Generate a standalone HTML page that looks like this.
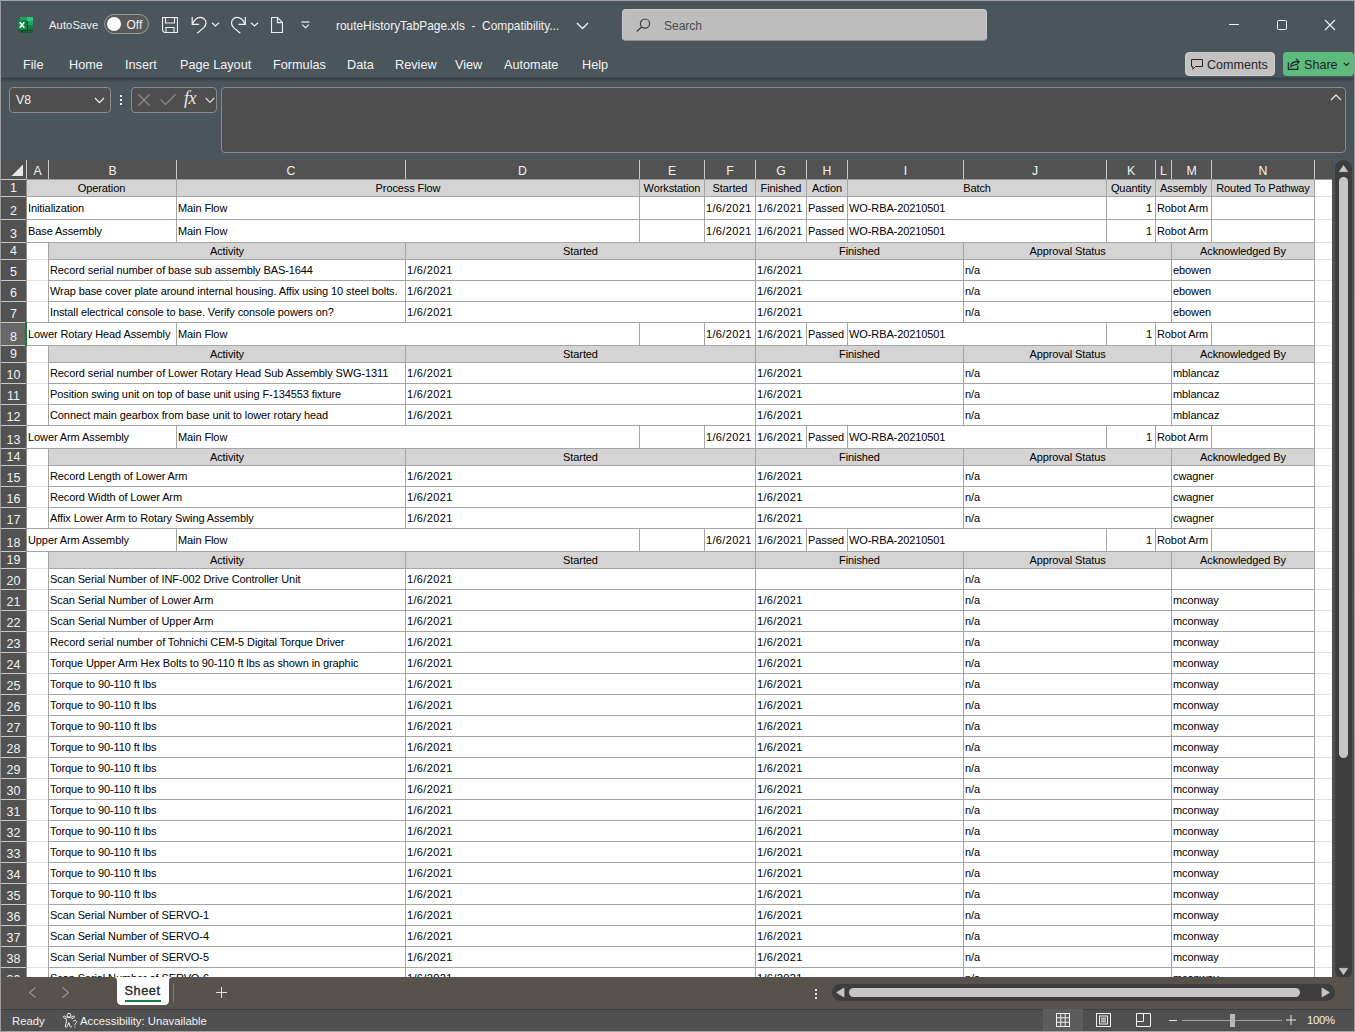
<!DOCTYPE html>
<html><head><meta charset="utf-8"><title>Excel</title>
<style>
*{margin:0;padding:0;box-sizing:border-box}
html,body{width:1355px;height:1032px;overflow:hidden;background:#4b555c}
body{position:relative;font-family:"Liberation Sans",sans-serif}
body div{position:absolute}
.t{white-space:pre;line-height:16px;height:16px}
.ui{color:#f3f3f3;font-size:12.7px}
.c{color:#000;font-size:11px;letter-spacing:-0.1px}
svg{position:absolute;overflow:visible}
</style></head><body>

<div style="left:0px;top:77px;width:1355px;height:1px;background:#444d53"></div>
<div style="left:0px;top:78px;width:1355px;height:1px;background:#363d42"></div>
<div style="left:0px;top:79px;width:1355px;height:1px;background:#3d454a"></div>
<div style="left:0px;top:80px;width:1355px;height:1px;background:#444c52"></div>
<div style="left:0px;top:81px;width:1355px;height:1px;background:#485157"></div>
<svg style="left:17px;top:17px" width="16" height="16" viewBox="0 0 16 16">
<rect x="3" y="0" width="7" height="4" fill="#21a366"/>
<rect x="10" y="0" width="6" height="4" fill="#33c481"/>
<rect x="10" y="4" width="6" height="4" fill="#21a366"/>
<rect x="3" y="4" width="7" height="8" fill="#107c41"/>
<rect x="10" y="8" width="6" height="4" fill="#107c41"/>
<rect x="3" y="12" width="13" height="4" fill="#185c37"/>
<rect x="1" y="4" width="10" height="10" fill="#0a3b1f" opacity="0.7"/>
<rect x="0" y="3" width="10" height="10" rx="0.5" fill="#118142"/>
<path d="M2.7 5.3 L7.3 10.7 M7.3 5.3 L2.7 10.7" stroke="#fff" stroke-width="1.6"/>
</svg>
<div class="t ui" style="left:49px;top:17px;font-size:11.2px;color:#f0f0f0;letter-spacing:0.1px">AutoSave</div>
<div style="left:104px;top:14px;width:45px;height:20px;border:1px solid #9c9c9c;border-radius:10px;background:#595959"></div>
<div style="left:107px;top:17px;width:14px;height:14px;border-radius:7px;background:#fff"></div>
<div class="t ui" style="left:126.5px;top:16.8px;font-size:12px;color:#f0f0f0">Off</div>
<svg style="left:162px;top:17px" width="16" height="16" viewBox="0 0 16 16" fill="none" stroke="#f0f0f0" stroke-width="1.1">
<path d="M0.55 0.55 H15.45 V15.45 H2.3 L0.55 13.7 Z"/><path d="M3.5 0.55 V6 H12.5 V0.55"/><path d="M4 15.45 V10.5 H12 V15.45"/></svg>
<svg style="left:190px;top:16px" width="18" height="18" viewBox="0 0 18 18" fill="none" stroke="#f0f0f0" stroke-width="1.2">
<path d="M2.2 1 V8.3 H9.1"/><path d="M2.6 7.9 C4.6 3.2 7.6 1.2 10.4 1.3 C13.6 1.4 16.2 4.2 16 7.4 C15.9 9.2 15 10.3 13.8 11.6 L7.2 17.2"/></svg>
<svg style="left:211px;top:22px" width="9" height="5" viewBox="0 0 9 5" fill="none" stroke="#f0f0f0" stroke-width="1.2"><path d="M1 0.8 L4.5 4 L8 0.8"/></svg>
<svg style="left:230px;top:16px" width="18" height="18" viewBox="0 0 18 18" fill="none" stroke="#f0f0f0" stroke-width="1.2">
<path d="M15.3 1 V8.3 H8.4"/><path d="M14.9 7.9 C12.9 3.2 9.9 1.2 7.1 1.3 C3.9 1.4 1.3 4.2 1.5 7.4 C1.6 9.2 2.5 10.3 3.7 11.6 L10.3 17.2"/></svg>
<svg style="left:250px;top:22px" width="9" height="5" viewBox="0 0 9 5" fill="none" stroke="#f0f0f0" stroke-width="1.2"><path d="M1 0.8 L4.5 4 L8 0.8"/></svg>
<svg style="left:271px;top:17px" width="12" height="16" viewBox="0 0 12 16" fill="none" stroke="#f0f0f0" stroke-width="1.1">
<path d="M0.55 0.55 H6.4 L11.45 5.6 V15.45 H0.55 Z"/><path d="M6.4 0.55 V5.6 H11.45"/></svg>
<svg style="left:301px;top:21px" width="9" height="8" viewBox="0 0 9 8" fill="none" stroke="#f0f0f0" stroke-width="1.2">
<path d="M0.5 1 H8.5"/><path d="M1.2 3.6 L4.5 6.6 L7.8 3.6"/></svg>
<div class="t ui" style="left:336px;top:18px;font-size:11.9px;color:#f3f3f3">routeHistoryTabPage.xls  -  Compatibility...</div>
<svg style="left:576px;top:22px" width="13" height="8" viewBox="0 0 13 8" fill="none" stroke="#f0f0f0" stroke-width="1.3"><path d="M1 1 L6.5 6.5 L12 1"/></svg>
<div style="left:622px;top:9px;width:365px;height:32px;background:#bdbdbd;border-radius:4px;border:1px solid #c9c9c9;border-bottom-color:#8f8f8f"></div>
<svg style="left:636px;top:18px" width="15" height="14" viewBox="0 0 15 14" fill="none" stroke="#3d3d3d" stroke-width="1.2">
<circle cx="9" cy="5.6" r="4.6"/><path d="M5.8 8.8 L0.8 13.5"/></svg>
<div class="t ui" style="left:664px;top:18px;font-size:12px;color:#4a4a4a">Search</div>
<div style="left:1229px;top:24px;width:10px;height:1px;background:#f3f3f3"></div>
<div style="left:1277px;top:20px;width:10px;height:10px;border:1px solid #f3f3f3;border-radius:1.5px"></div>
<svg style="left:1324px;top:19px" width="12" height="12" viewBox="0 0 12 12" fill="none" stroke="#f3f3f3" stroke-width="1.1"><path d="M1 1 L11 11 M11 1 L1 11"/></svg>
<div class="t ui" style="left:23px;top:57px;font-size:12.7px;color:#f3f3f3">File</div>
<div class="t ui" style="left:69px;top:57px;font-size:12.7px;color:#f3f3f3">Home</div>
<div class="t ui" style="left:125px;top:57px;font-size:12.7px;color:#f3f3f3">Insert</div>
<div class="t ui" style="left:180px;top:57px;font-size:12.7px;color:#f3f3f3">Page Layout</div>
<div class="t ui" style="left:273px;top:57px;font-size:12.7px;color:#f3f3f3">Formulas</div>
<div class="t ui" style="left:347px;top:57px;font-size:12.7px;color:#f3f3f3">Data</div>
<div class="t ui" style="left:395px;top:57px;font-size:12.7px;color:#f3f3f3">Review</div>
<div class="t ui" style="left:455px;top:57px;font-size:12.7px;color:#f3f3f3">View</div>
<div class="t ui" style="left:504px;top:57px;font-size:12.7px;color:#f3f3f3">Automate</div>
<div class="t ui" style="left:582px;top:57px;font-size:12.7px;color:#f3f3f3">Help</div>
<div style="left:1185px;top:52px;width:90px;height:24px;background:#c2c2c2;border-radius:4px;border:1px solid #cdcdcd"></div>
<svg style="left:1191px;top:59px" width="12" height="11" viewBox="0 0 12 11" fill="none" stroke="#262626" stroke-width="1">
<path d="M0.5 0.5 H11.5 V7.5 H4.5 L1.8 10.2 V7.5 H0.5 Z"/></svg>
<div class="t ui" style="left:1207px;top:57px;font-size:12.6px;color:#262626">Comments</div>
<div style="left:1283px;top:52px;width:71px;height:24px;background:#5dbb7e;border-radius:4px"></div>
<svg style="left:1287px;top:57px" width="14" height="14" viewBox="0 0 14 14" fill="none" stroke="#1f1f1f" stroke-width="1.1">
<path d="M1.3 5.2 V12.4 H10.8 V8.8"/><path d="M3.6 8.6 C4.2 5.8 6.6 4.4 11.6 4.6"/><path d="M2.9 10.4 C5.4 8 7.6 7.4 10.2 7.6"/><path d="M8.8 1.6 L12.2 4.7 L9.4 8"/></svg>
<div class="t ui" style="left:1304px;top:57px;font-size:12.6px;color:#1f1f1f">Share</div>
<svg style="left:1343px;top:62px" width="7" height="5" viewBox="0 0 7 5" fill="none" stroke="#1f1f1f" stroke-width="1.1"><path d="M0.8 0.8 L3.5 3.5 L6.2 0.8"/></svg>
<div style="left:9px;top:87px;width:102px;height:26px;background:#4e4e4e;border:1px solid #8b8b8b;border-radius:4px"></div>
<div class="t ui" style="left:16px;top:92px;font-size:12.3px;color:#f3f3f3">V8</div>
<svg style="left:94px;top:97px" width="11" height="7" viewBox="0 0 11 7" fill="none" stroke="#f0f0f0" stroke-width="1.2"><path d="M1 1 L5.5 5.6 L10 1"/></svg>
<div style="left:120px;top:95px;width:2px;height:2px;background:#f0f0f0"></div>
<div style="left:120px;top:99px;width:2px;height:2px;background:#f0f0f0"></div>
<div style="left:120px;top:103px;width:2px;height:2px;background:#f0f0f0"></div>
<div style="left:131px;top:87px;width:86px;height:26px;background:#4e4e4e;border:1px solid #8b8b8b;border-radius:4px"></div>
<svg style="left:138px;top:94px" width="12" height="12" viewBox="0 0 12 12" fill="none" stroke="#8e8e8e" stroke-width="1.1"><path d="M0.5 0.5 L11.5 11.5 M11.5 0.5 L0.5 11.5"/></svg>
<svg style="left:160px;top:94px" width="16" height="11" viewBox="0 0 16 11" fill="none" stroke="#8e8e8e" stroke-width="1.1"><path d="M0.5 5.5 L5.5 10.5 L15.5 0.5"/></svg>
<div class="t" style="left:184px;top:90px;font-family:'Liberation Serif',serif;font-style:italic;font-size:18px;line-height:17px;height:17px;color:#e6e6e6;letter-spacing:-0.5px">fx</div>
<svg style="left:205px;top:97px" width="10" height="7" viewBox="0 0 10 7" fill="none" stroke="#e0e0e0" stroke-width="1.1"><path d="M0.8 1 L5 5.4 L9.2 1"/></svg>
<div style="left:221px;top:87px;width:1125px;height:66px;background:#4e4e4e;border:1px solid #8b8b8b;border-radius:4px"></div>
<svg style="left:1330px;top:94px" width="12" height="7" viewBox="0 0 12 7" fill="none" stroke="#f0f0f0" stroke-width="1.2"><path d="M1 6 L6 1 L11 6"/></svg>
<div style="left:1px;top:160px;width:1331px;height:817px;overflow:hidden;background:#fff">
<div style="left:47px;top:19px;width:1px;height:900px;background:#e2e2e2"></div>
<div style="left:175px;top:19px;width:1px;height:900px;background:#e2e2e2"></div>
<div style="left:404px;top:19px;width:1px;height:900px;background:#e2e2e2"></div>
<div style="left:638px;top:19px;width:1px;height:900px;background:#e2e2e2"></div>
<div style="left:703px;top:19px;width:1px;height:900px;background:#e2e2e2"></div>
<div style="left:754px;top:19px;width:1px;height:900px;background:#e2e2e2"></div>
<div style="left:805px;top:19px;width:1px;height:900px;background:#e2e2e2"></div>
<div style="left:846px;top:19px;width:1px;height:900px;background:#e2e2e2"></div>
<div style="left:962px;top:19px;width:1px;height:900px;background:#e2e2e2"></div>
<div style="left:1105px;top:19px;width:1px;height:900px;background:#e2e2e2"></div>
<div style="left:1154px;top:19px;width:1px;height:900px;background:#e2e2e2"></div>
<div style="left:1170px;top:19px;width:1px;height:900px;background:#e2e2e2"></div>
<div style="left:1210px;top:19px;width:1px;height:900px;background:#e2e2e2"></div>
<div style="left:1313px;top:19px;width:1px;height:900px;background:#e2e2e2"></div>
<div style="left:1377px;top:19px;width:1px;height:900px;background:#e2e2e2"></div>
<div style="left:25px;top:36px;width:1400px;height:1px;background:#e2e2e2"></div>
<div style="left:25px;top:59px;width:1400px;height:1px;background:#e2e2e2"></div>
<div style="left:25px;top:82px;width:1400px;height:1px;background:#e2e2e2"></div>
<div style="left:25px;top:99px;width:1400px;height:1px;background:#e2e2e2"></div>
<div style="left:25px;top:120px;width:1400px;height:1px;background:#e2e2e2"></div>
<div style="left:25px;top:141px;width:1400px;height:1px;background:#e2e2e2"></div>
<div style="left:25px;top:162px;width:1400px;height:1px;background:#e2e2e2"></div>
<div style="left:25px;top:185px;width:1400px;height:1px;background:#e2e2e2"></div>
<div style="left:25px;top:202px;width:1400px;height:1px;background:#e2e2e2"></div>
<div style="left:25px;top:223px;width:1400px;height:1px;background:#e2e2e2"></div>
<div style="left:25px;top:244px;width:1400px;height:1px;background:#e2e2e2"></div>
<div style="left:25px;top:265px;width:1400px;height:1px;background:#e2e2e2"></div>
<div style="left:25px;top:288px;width:1400px;height:1px;background:#e2e2e2"></div>
<div style="left:25px;top:305px;width:1400px;height:1px;background:#e2e2e2"></div>
<div style="left:25px;top:326px;width:1400px;height:1px;background:#e2e2e2"></div>
<div style="left:25px;top:347px;width:1400px;height:1px;background:#e2e2e2"></div>
<div style="left:25px;top:368px;width:1400px;height:1px;background:#e2e2e2"></div>
<div style="left:25px;top:391px;width:1400px;height:1px;background:#e2e2e2"></div>
<div style="left:25px;top:408px;width:1400px;height:1px;background:#e2e2e2"></div>
<div style="left:25px;top:429px;width:1400px;height:1px;background:#e2e2e2"></div>
<div style="left:25px;top:450px;width:1400px;height:1px;background:#e2e2e2"></div>
<div style="left:25px;top:471px;width:1400px;height:1px;background:#e2e2e2"></div>
<div style="left:25px;top:492px;width:1400px;height:1px;background:#e2e2e2"></div>
<div style="left:25px;top:513px;width:1400px;height:1px;background:#e2e2e2"></div>
<div style="left:25px;top:534px;width:1400px;height:1px;background:#e2e2e2"></div>
<div style="left:25px;top:555px;width:1400px;height:1px;background:#e2e2e2"></div>
<div style="left:25px;top:576px;width:1400px;height:1px;background:#e2e2e2"></div>
<div style="left:25px;top:597px;width:1400px;height:1px;background:#e2e2e2"></div>
<div style="left:25px;top:618px;width:1400px;height:1px;background:#e2e2e2"></div>
<div style="left:25px;top:639px;width:1400px;height:1px;background:#e2e2e2"></div>
<div style="left:25px;top:660px;width:1400px;height:1px;background:#e2e2e2"></div>
<div style="left:25px;top:681px;width:1400px;height:1px;background:#e2e2e2"></div>
<div style="left:25px;top:702px;width:1400px;height:1px;background:#e2e2e2"></div>
<div style="left:25px;top:723px;width:1400px;height:1px;background:#e2e2e2"></div>
<div style="left:25px;top:744px;width:1400px;height:1px;background:#e2e2e2"></div>
<div style="left:25px;top:765px;width:1400px;height:1px;background:#e2e2e2"></div>
<div style="left:25px;top:786px;width:1400px;height:1px;background:#e2e2e2"></div>
<div style="left:25px;top:807px;width:1400px;height:1px;background:#e2e2e2"></div>
<div style="left:25px;top:828px;width:1400px;height:1px;background:#e2e2e2"></div>
<div style="left:25px;top:19px;width:151px;height:18px;border:1px solid #a5a5a5;background:#d4d4d4;"></div>
<div class="t c" style="left:-49.5px;top:20.2px;width:300px;text-align:center">Operation</div>
<div style="left:175px;top:19px;width:464px;height:18px;border:1px solid #a5a5a5;background:#d4d4d4;"></div>
<div class="t c" style="left:257.0px;top:20.2px;width:300px;text-align:center">Process Flow</div>
<div style="left:638px;top:19px;width:66px;height:18px;border:1px solid #a5a5a5;background:#d4d4d4;"></div>
<div class="t c" style="left:521.0px;top:20.2px;width:300px;text-align:center">Workstation</div>
<div style="left:703px;top:19px;width:52px;height:18px;border:1px solid #a5a5a5;background:#d4d4d4;"></div>
<div class="t c" style="left:579.0px;top:20.2px;width:300px;text-align:center">Started</div>
<div style="left:754px;top:19px;width:52px;height:18px;border:1px solid #a5a5a5;background:#d4d4d4;"></div>
<div class="t c" style="left:630.0px;top:20.2px;width:300px;text-align:center">Finished</div>
<div style="left:805px;top:19px;width:42px;height:18px;border:1px solid #a5a5a5;background:#d4d4d4;"></div>
<div class="t c" style="left:676.0px;top:20.2px;width:300px;text-align:center">Action</div>
<div style="left:846px;top:19px;width:260px;height:18px;border:1px solid #a5a5a5;background:#d4d4d4;"></div>
<div class="t c" style="left:826.0px;top:20.2px;width:300px;text-align:center">Batch</div>
<div style="left:1105px;top:19px;width:50px;height:18px;border:1px solid #a5a5a5;background:#d4d4d4;"></div>
<div class="t c" style="left:980.0px;top:20.2px;width:300px;text-align:center">Quantity</div>
<div style="left:1154px;top:19px;width:57px;height:18px;border:1px solid #a5a5a5;background:#d4d4d4;"></div>
<div class="t c" style="left:1032.5px;top:20.2px;width:300px;text-align:center">Assembly</div>
<div style="left:1210px;top:19px;width:104px;height:18px;border:1px solid #a5a5a5;background:#d4d4d4;"></div>
<div class="t c" style="left:1112.0px;top:20.2px;width:300px;text-align:center">Routed To Pathway</div>
<div style="left:25px;top:36px;width:151px;height:24px;border:1px solid #a5a5a5;background:#fff;"></div>
<div class="t c" style="left:27px;top:40.2px;">Initialization</div>
<div style="left:175px;top:36px;width:464px;height:24px;border:1px solid #a5a5a5;background:#fff;"></div>
<div class="t c" style="left:177px;top:40.2px;">Main Flow</div>
<div style="left:638px;top:36px;width:66px;height:24px;border:1px solid #a5a5a5;background:#fff;"></div>
<div style="left:703px;top:36px;width:52px;height:24px;border:1px solid #a5a5a5;background:#fff;"></div>
<div class="t c" style="left:705px;top:40.2px;letter-spacing:0.35px;">1/6/2021</div>
<div style="left:754px;top:36px;width:52px;height:24px;border:1px solid #a5a5a5;background:#fff;"></div>
<div class="t c" style="left:756px;top:40.2px;letter-spacing:0.35px;">1/6/2021</div>
<div style="left:805px;top:36px;width:42px;height:24px;border:1px solid #a5a5a5;background:#fff;"></div>
<div class="t c" style="left:807px;top:40.2px;">Passed</div>
<div style="left:846px;top:36px;width:260px;height:24px;border:1px solid #a5a5a5;background:#fff;"></div>
<div class="t c" style="left:848px;top:40.2px;">WO-RBA-20210501</div>
<div style="left:1105px;top:36px;width:50px;height:24px;border:1px solid #a5a5a5;background:#fff;"></div>
<div class="t c" style="left:851px;top:40.2px;width:300px;text-align:right">1</div>
<div style="left:1154px;top:36px;width:57px;height:24px;border:1px solid #a5a5a5;background:#fff;"></div>
<div class="t c" style="left:1156px;top:40.2px;">Robot Arm</div>
<div style="left:1210px;top:36px;width:104px;height:24px;border:1px solid #a5a5a5;background:#fff;"></div>
<div style="left:25px;top:59px;width:151px;height:24px;border:1px solid #a5a5a5;background:#fff;"></div>
<div class="t c" style="left:27px;top:63.2px;">Base Assembly</div>
<div style="left:175px;top:59px;width:464px;height:24px;border:1px solid #a5a5a5;background:#fff;"></div>
<div class="t c" style="left:177px;top:63.2px;">Main Flow</div>
<div style="left:638px;top:59px;width:66px;height:24px;border:1px solid #a5a5a5;background:#fff;"></div>
<div style="left:703px;top:59px;width:52px;height:24px;border:1px solid #a5a5a5;background:#fff;"></div>
<div class="t c" style="left:705px;top:63.2px;letter-spacing:0.35px;">1/6/2021</div>
<div style="left:754px;top:59px;width:52px;height:24px;border:1px solid #a5a5a5;background:#fff;"></div>
<div class="t c" style="left:756px;top:63.2px;letter-spacing:0.35px;">1/6/2021</div>
<div style="left:805px;top:59px;width:42px;height:24px;border:1px solid #a5a5a5;background:#fff;"></div>
<div class="t c" style="left:807px;top:63.2px;">Passed</div>
<div style="left:846px;top:59px;width:260px;height:24px;border:1px solid #a5a5a5;background:#fff;"></div>
<div class="t c" style="left:848px;top:63.2px;">WO-RBA-20210501</div>
<div style="left:1105px;top:59px;width:50px;height:24px;border:1px solid #a5a5a5;background:#fff;"></div>
<div class="t c" style="left:851px;top:63.2px;width:300px;text-align:right">1</div>
<div style="left:1154px;top:59px;width:57px;height:24px;border:1px solid #a5a5a5;background:#fff;"></div>
<div class="t c" style="left:1156px;top:63.2px;">Robot Arm</div>
<div style="left:1210px;top:59px;width:104px;height:24px;border:1px solid #a5a5a5;background:#fff;"></div>
<div style="left:25px;top:162px;width:151px;height:24px;border:1px solid #a5a5a5;background:#fff;"></div>
<div class="t c" style="left:27px;top:166.2px;">Lower Rotary Head Assembly</div>
<div style="left:175px;top:162px;width:464px;height:24px;border:1px solid #a5a5a5;background:#fff;"></div>
<div class="t c" style="left:177px;top:166.2px;">Main Flow</div>
<div style="left:638px;top:162px;width:66px;height:24px;border:1px solid #a5a5a5;background:#fff;"></div>
<div style="left:703px;top:162px;width:52px;height:24px;border:1px solid #a5a5a5;background:#fff;"></div>
<div class="t c" style="left:705px;top:166.2px;letter-spacing:0.35px;">1/6/2021</div>
<div style="left:754px;top:162px;width:52px;height:24px;border:1px solid #a5a5a5;background:#fff;"></div>
<div class="t c" style="left:756px;top:166.2px;letter-spacing:0.35px;">1/6/2021</div>
<div style="left:805px;top:162px;width:42px;height:24px;border:1px solid #a5a5a5;background:#fff;"></div>
<div class="t c" style="left:807px;top:166.2px;">Passed</div>
<div style="left:846px;top:162px;width:260px;height:24px;border:1px solid #a5a5a5;background:#fff;"></div>
<div class="t c" style="left:848px;top:166.2px;">WO-RBA-20210501</div>
<div style="left:1105px;top:162px;width:50px;height:24px;border:1px solid #a5a5a5;background:#fff;"></div>
<div class="t c" style="left:851px;top:166.2px;width:300px;text-align:right">1</div>
<div style="left:1154px;top:162px;width:57px;height:24px;border:1px solid #a5a5a5;background:#fff;"></div>
<div class="t c" style="left:1156px;top:166.2px;">Robot Arm</div>
<div style="left:1210px;top:162px;width:104px;height:24px;border:1px solid #a5a5a5;background:#fff;"></div>
<div style="left:25px;top:265px;width:151px;height:24px;border:1px solid #a5a5a5;background:#fff;"></div>
<div class="t c" style="left:27px;top:269.2px;">Lower Arm Assembly</div>
<div style="left:175px;top:265px;width:464px;height:24px;border:1px solid #a5a5a5;background:#fff;"></div>
<div class="t c" style="left:177px;top:269.2px;">Main Flow</div>
<div style="left:638px;top:265px;width:66px;height:24px;border:1px solid #a5a5a5;background:#fff;"></div>
<div style="left:703px;top:265px;width:52px;height:24px;border:1px solid #a5a5a5;background:#fff;"></div>
<div class="t c" style="left:705px;top:269.2px;letter-spacing:0.35px;">1/6/2021</div>
<div style="left:754px;top:265px;width:52px;height:24px;border:1px solid #a5a5a5;background:#fff;"></div>
<div class="t c" style="left:756px;top:269.2px;letter-spacing:0.35px;">1/6/2021</div>
<div style="left:805px;top:265px;width:42px;height:24px;border:1px solid #a5a5a5;background:#fff;"></div>
<div class="t c" style="left:807px;top:269.2px;">Passed</div>
<div style="left:846px;top:265px;width:260px;height:24px;border:1px solid #a5a5a5;background:#fff;"></div>
<div class="t c" style="left:848px;top:269.2px;">WO-RBA-20210501</div>
<div style="left:1105px;top:265px;width:50px;height:24px;border:1px solid #a5a5a5;background:#fff;"></div>
<div class="t c" style="left:851px;top:269.2px;width:300px;text-align:right">1</div>
<div style="left:1154px;top:265px;width:57px;height:24px;border:1px solid #a5a5a5;background:#fff;"></div>
<div class="t c" style="left:1156px;top:269.2px;">Robot Arm</div>
<div style="left:1210px;top:265px;width:104px;height:24px;border:1px solid #a5a5a5;background:#fff;"></div>
<div style="left:25px;top:368px;width:151px;height:24px;border:1px solid #a5a5a5;background:#fff;"></div>
<div class="t c" style="left:27px;top:372.2px;">Upper Arm Assembly</div>
<div style="left:175px;top:368px;width:464px;height:24px;border:1px solid #a5a5a5;background:#fff;"></div>
<div class="t c" style="left:177px;top:372.2px;">Main Flow</div>
<div style="left:638px;top:368px;width:66px;height:24px;border:1px solid #a5a5a5;background:#fff;"></div>
<div style="left:703px;top:368px;width:52px;height:24px;border:1px solid #a5a5a5;background:#fff;"></div>
<div class="t c" style="left:705px;top:372.2px;letter-spacing:0.35px;">1/6/2021</div>
<div style="left:754px;top:368px;width:52px;height:24px;border:1px solid #a5a5a5;background:#fff;"></div>
<div class="t c" style="left:756px;top:372.2px;letter-spacing:0.35px;">1/6/2021</div>
<div style="left:805px;top:368px;width:42px;height:24px;border:1px solid #a5a5a5;background:#fff;"></div>
<div class="t c" style="left:807px;top:372.2px;">Passed</div>
<div style="left:846px;top:368px;width:260px;height:24px;border:1px solid #a5a5a5;background:#fff;"></div>
<div class="t c" style="left:848px;top:372.2px;">WO-RBA-20210501</div>
<div style="left:1105px;top:368px;width:50px;height:24px;border:1px solid #a5a5a5;background:#fff;"></div>
<div class="t c" style="left:851px;top:372.2px;width:300px;text-align:right">1</div>
<div style="left:1154px;top:368px;width:57px;height:24px;border:1px solid #a5a5a5;background:#fff;"></div>
<div class="t c" style="left:1156px;top:372.2px;">Robot Arm</div>
<div style="left:1210px;top:368px;width:104px;height:24px;border:1px solid #a5a5a5;background:#fff;"></div>
<div style="left:47px;top:82px;width:358px;height:18px;border:1px solid #a5a5a5;background:#d4d4d4;"></div>
<div class="t c" style="left:76.0px;top:83.2px;width:300px;text-align:center">Activity</div>
<div style="left:404px;top:82px;width:351px;height:18px;border:1px solid #a5a5a5;background:#d4d4d4;"></div>
<div class="t c" style="left:429.5px;top:83.2px;width:300px;text-align:center">Started</div>
<div style="left:754px;top:82px;width:209px;height:18px;border:1px solid #a5a5a5;background:#d4d4d4;"></div>
<div class="t c" style="left:708.5px;top:83.2px;width:300px;text-align:center">Finished</div>
<div style="left:962px;top:82px;width:209px;height:18px;border:1px solid #a5a5a5;background:#d4d4d4;"></div>
<div class="t c" style="left:916.5px;top:83.2px;width:300px;text-align:center">Approval Status</div>
<div style="left:1170px;top:82px;width:144px;height:18px;border:1px solid #a5a5a5;background:#d4d4d4;"></div>
<div class="t c" style="left:1092.0px;top:83.2px;width:300px;text-align:center">Acknowledged By</div>
<div style="left:47px;top:185px;width:358px;height:18px;border:1px solid #a5a5a5;background:#d4d4d4;"></div>
<div class="t c" style="left:76.0px;top:186.2px;width:300px;text-align:center">Activity</div>
<div style="left:404px;top:185px;width:351px;height:18px;border:1px solid #a5a5a5;background:#d4d4d4;"></div>
<div class="t c" style="left:429.5px;top:186.2px;width:300px;text-align:center">Started</div>
<div style="left:754px;top:185px;width:209px;height:18px;border:1px solid #a5a5a5;background:#d4d4d4;"></div>
<div class="t c" style="left:708.5px;top:186.2px;width:300px;text-align:center">Finished</div>
<div style="left:962px;top:185px;width:209px;height:18px;border:1px solid #a5a5a5;background:#d4d4d4;"></div>
<div class="t c" style="left:916.5px;top:186.2px;width:300px;text-align:center">Approval Status</div>
<div style="left:1170px;top:185px;width:144px;height:18px;border:1px solid #a5a5a5;background:#d4d4d4;"></div>
<div class="t c" style="left:1092.0px;top:186.2px;width:300px;text-align:center">Acknowledged By</div>
<div style="left:47px;top:288px;width:358px;height:18px;border:1px solid #a5a5a5;background:#d4d4d4;"></div>
<div class="t c" style="left:76.0px;top:289.2px;width:300px;text-align:center">Activity</div>
<div style="left:404px;top:288px;width:351px;height:18px;border:1px solid #a5a5a5;background:#d4d4d4;"></div>
<div class="t c" style="left:429.5px;top:289.2px;width:300px;text-align:center">Started</div>
<div style="left:754px;top:288px;width:209px;height:18px;border:1px solid #a5a5a5;background:#d4d4d4;"></div>
<div class="t c" style="left:708.5px;top:289.2px;width:300px;text-align:center">Finished</div>
<div style="left:962px;top:288px;width:209px;height:18px;border:1px solid #a5a5a5;background:#d4d4d4;"></div>
<div class="t c" style="left:916.5px;top:289.2px;width:300px;text-align:center">Approval Status</div>
<div style="left:1170px;top:288px;width:144px;height:18px;border:1px solid #a5a5a5;background:#d4d4d4;"></div>
<div class="t c" style="left:1092.0px;top:289.2px;width:300px;text-align:center">Acknowledged By</div>
<div style="left:47px;top:391px;width:358px;height:18px;border:1px solid #a5a5a5;background:#d4d4d4;"></div>
<div class="t c" style="left:76.0px;top:392.2px;width:300px;text-align:center">Activity</div>
<div style="left:404px;top:391px;width:351px;height:18px;border:1px solid #a5a5a5;background:#d4d4d4;"></div>
<div class="t c" style="left:429.5px;top:392.2px;width:300px;text-align:center">Started</div>
<div style="left:754px;top:391px;width:209px;height:18px;border:1px solid #a5a5a5;background:#d4d4d4;"></div>
<div class="t c" style="left:708.5px;top:392.2px;width:300px;text-align:center">Finished</div>
<div style="left:962px;top:391px;width:209px;height:18px;border:1px solid #a5a5a5;background:#d4d4d4;"></div>
<div class="t c" style="left:916.5px;top:392.2px;width:300px;text-align:center">Approval Status</div>
<div style="left:1170px;top:391px;width:144px;height:18px;border:1px solid #a5a5a5;background:#d4d4d4;"></div>
<div class="t c" style="left:1092.0px;top:392.2px;width:300px;text-align:center">Acknowledged By</div>
<div style="left:47px;top:99px;width:358px;height:22px;border:1px solid #a5a5a5;background:#fff;"></div>
<div class="t c" style="left:49px;top:102.2px;">Record serial number of base sub assembly BAS-1644</div>
<div style="left:404px;top:99px;width:351px;height:22px;border:1px solid #a5a5a5;background:#fff;"></div>
<div class="t c" style="left:406px;top:102.2px;letter-spacing:0.35px;">1/6/2021</div>
<div style="left:754px;top:99px;width:209px;height:22px;border:1px solid #a5a5a5;background:#fff;"></div>
<div class="t c" style="left:756px;top:102.2px;letter-spacing:0.35px;">1/6/2021</div>
<div style="left:962px;top:99px;width:209px;height:22px;border:1px solid #a5a5a5;background:#fff;"></div>
<div class="t c" style="left:964px;top:102.2px;">n/a</div>
<div style="left:1170px;top:99px;width:144px;height:22px;border:1px solid #a5a5a5;background:#fff;"></div>
<div class="t c" style="left:1172px;top:102.2px;">ebowen</div>
<div style="left:47px;top:120px;width:358px;height:22px;border:1px solid #a5a5a5;background:#fff;"></div>
<div class="t c" style="left:49px;top:123.2px;">Wrap base cover plate around internal housing. Affix using 10 steel bolts.</div>
<div style="left:404px;top:120px;width:351px;height:22px;border:1px solid #a5a5a5;background:#fff;"></div>
<div class="t c" style="left:406px;top:123.2px;letter-spacing:0.35px;">1/6/2021</div>
<div style="left:754px;top:120px;width:209px;height:22px;border:1px solid #a5a5a5;background:#fff;"></div>
<div class="t c" style="left:756px;top:123.2px;letter-spacing:0.35px;">1/6/2021</div>
<div style="left:962px;top:120px;width:209px;height:22px;border:1px solid #a5a5a5;background:#fff;"></div>
<div class="t c" style="left:964px;top:123.2px;">n/a</div>
<div style="left:1170px;top:120px;width:144px;height:22px;border:1px solid #a5a5a5;background:#fff;"></div>
<div class="t c" style="left:1172px;top:123.2px;">ebowen</div>
<div style="left:47px;top:141px;width:358px;height:22px;border:1px solid #a5a5a5;background:#fff;"></div>
<div class="t c" style="left:49px;top:144.2px;">Install electrical console to base. Verify console powers on?</div>
<div style="left:404px;top:141px;width:351px;height:22px;border:1px solid #a5a5a5;background:#fff;"></div>
<div class="t c" style="left:406px;top:144.2px;letter-spacing:0.35px;">1/6/2021</div>
<div style="left:754px;top:141px;width:209px;height:22px;border:1px solid #a5a5a5;background:#fff;"></div>
<div class="t c" style="left:756px;top:144.2px;letter-spacing:0.35px;">1/6/2021</div>
<div style="left:962px;top:141px;width:209px;height:22px;border:1px solid #a5a5a5;background:#fff;"></div>
<div class="t c" style="left:964px;top:144.2px;">n/a</div>
<div style="left:1170px;top:141px;width:144px;height:22px;border:1px solid #a5a5a5;background:#fff;"></div>
<div class="t c" style="left:1172px;top:144.2px;">ebowen</div>
<div style="left:47px;top:202px;width:358px;height:22px;border:1px solid #a5a5a5;background:#fff;"></div>
<div class="t c" style="left:49px;top:205.2px;">Record serial number of Lower Rotary Head Sub Assembly SWG-1311</div>
<div style="left:404px;top:202px;width:351px;height:22px;border:1px solid #a5a5a5;background:#fff;"></div>
<div class="t c" style="left:406px;top:205.2px;letter-spacing:0.35px;">1/6/2021</div>
<div style="left:754px;top:202px;width:209px;height:22px;border:1px solid #a5a5a5;background:#fff;"></div>
<div class="t c" style="left:756px;top:205.2px;letter-spacing:0.35px;">1/6/2021</div>
<div style="left:962px;top:202px;width:209px;height:22px;border:1px solid #a5a5a5;background:#fff;"></div>
<div class="t c" style="left:964px;top:205.2px;">n/a</div>
<div style="left:1170px;top:202px;width:144px;height:22px;border:1px solid #a5a5a5;background:#fff;"></div>
<div class="t c" style="left:1172px;top:205.2px;">mblancaz</div>
<div style="left:47px;top:223px;width:358px;height:22px;border:1px solid #a5a5a5;background:#fff;"></div>
<div class="t c" style="left:49px;top:226.2px;">Position swing unit on top of base unit using F-134553 fixture</div>
<div style="left:404px;top:223px;width:351px;height:22px;border:1px solid #a5a5a5;background:#fff;"></div>
<div class="t c" style="left:406px;top:226.2px;letter-spacing:0.35px;">1/6/2021</div>
<div style="left:754px;top:223px;width:209px;height:22px;border:1px solid #a5a5a5;background:#fff;"></div>
<div class="t c" style="left:756px;top:226.2px;letter-spacing:0.35px;">1/6/2021</div>
<div style="left:962px;top:223px;width:209px;height:22px;border:1px solid #a5a5a5;background:#fff;"></div>
<div class="t c" style="left:964px;top:226.2px;">n/a</div>
<div style="left:1170px;top:223px;width:144px;height:22px;border:1px solid #a5a5a5;background:#fff;"></div>
<div class="t c" style="left:1172px;top:226.2px;">mblancaz</div>
<div style="left:47px;top:244px;width:358px;height:22px;border:1px solid #a5a5a5;background:#fff;"></div>
<div class="t c" style="left:49px;top:247.2px;">Connect main gearbox from base unit to lower rotary head</div>
<div style="left:404px;top:244px;width:351px;height:22px;border:1px solid #a5a5a5;background:#fff;"></div>
<div class="t c" style="left:406px;top:247.2px;letter-spacing:0.35px;">1/6/2021</div>
<div style="left:754px;top:244px;width:209px;height:22px;border:1px solid #a5a5a5;background:#fff;"></div>
<div class="t c" style="left:756px;top:247.2px;letter-spacing:0.35px;">1/6/2021</div>
<div style="left:962px;top:244px;width:209px;height:22px;border:1px solid #a5a5a5;background:#fff;"></div>
<div class="t c" style="left:964px;top:247.2px;">n/a</div>
<div style="left:1170px;top:244px;width:144px;height:22px;border:1px solid #a5a5a5;background:#fff;"></div>
<div class="t c" style="left:1172px;top:247.2px;">mblancaz</div>
<div style="left:47px;top:305px;width:358px;height:22px;border:1px solid #a5a5a5;background:#fff;"></div>
<div class="t c" style="left:49px;top:308.2px;">Record Length of Lower Arm</div>
<div style="left:404px;top:305px;width:351px;height:22px;border:1px solid #a5a5a5;background:#fff;"></div>
<div class="t c" style="left:406px;top:308.2px;letter-spacing:0.35px;">1/6/2021</div>
<div style="left:754px;top:305px;width:209px;height:22px;border:1px solid #a5a5a5;background:#fff;"></div>
<div class="t c" style="left:756px;top:308.2px;letter-spacing:0.35px;">1/6/2021</div>
<div style="left:962px;top:305px;width:209px;height:22px;border:1px solid #a5a5a5;background:#fff;"></div>
<div class="t c" style="left:964px;top:308.2px;">n/a</div>
<div style="left:1170px;top:305px;width:144px;height:22px;border:1px solid #a5a5a5;background:#fff;"></div>
<div class="t c" style="left:1172px;top:308.2px;">cwagner</div>
<div style="left:47px;top:326px;width:358px;height:22px;border:1px solid #a5a5a5;background:#fff;"></div>
<div class="t c" style="left:49px;top:329.2px;">Record Width of Lower Arm</div>
<div style="left:404px;top:326px;width:351px;height:22px;border:1px solid #a5a5a5;background:#fff;"></div>
<div class="t c" style="left:406px;top:329.2px;letter-spacing:0.35px;">1/6/2021</div>
<div style="left:754px;top:326px;width:209px;height:22px;border:1px solid #a5a5a5;background:#fff;"></div>
<div class="t c" style="left:756px;top:329.2px;letter-spacing:0.35px;">1/6/2021</div>
<div style="left:962px;top:326px;width:209px;height:22px;border:1px solid #a5a5a5;background:#fff;"></div>
<div class="t c" style="left:964px;top:329.2px;">n/a</div>
<div style="left:1170px;top:326px;width:144px;height:22px;border:1px solid #a5a5a5;background:#fff;"></div>
<div class="t c" style="left:1172px;top:329.2px;">cwagner</div>
<div style="left:47px;top:347px;width:358px;height:22px;border:1px solid #a5a5a5;background:#fff;"></div>
<div class="t c" style="left:49px;top:350.2px;">Affix Lower Arm to Rotary Swing Assembly</div>
<div style="left:404px;top:347px;width:351px;height:22px;border:1px solid #a5a5a5;background:#fff;"></div>
<div class="t c" style="left:406px;top:350.2px;letter-spacing:0.35px;">1/6/2021</div>
<div style="left:754px;top:347px;width:209px;height:22px;border:1px solid #a5a5a5;background:#fff;"></div>
<div class="t c" style="left:756px;top:350.2px;letter-spacing:0.35px;">1/6/2021</div>
<div style="left:962px;top:347px;width:209px;height:22px;border:1px solid #a5a5a5;background:#fff;"></div>
<div class="t c" style="left:964px;top:350.2px;">n/a</div>
<div style="left:1170px;top:347px;width:144px;height:22px;border:1px solid #a5a5a5;background:#fff;"></div>
<div class="t c" style="left:1172px;top:350.2px;">cwagner</div>
<div style="left:47px;top:408px;width:358px;height:22px;border:1px solid #a5a5a5;background:#fff;"></div>
<div class="t c" style="left:49px;top:411.2px;">Scan Serial Number of INF-002 Drive Controller Unit</div>
<div style="left:404px;top:408px;width:351px;height:22px;border:1px solid #a5a5a5;background:#fff;"></div>
<div class="t c" style="left:406px;top:411.2px;letter-spacing:0.35px;">1/6/2021</div>
<div style="left:754px;top:408px;width:209px;height:22px;border:1px solid #a5a5a5;background:#fff;"></div>
<div style="left:962px;top:408px;width:209px;height:22px;border:1px solid #a5a5a5;background:#fff;"></div>
<div class="t c" style="left:964px;top:411.2px;">n/a</div>
<div style="left:1170px;top:408px;width:144px;height:22px;border:1px solid #a5a5a5;background:#fff;"></div>
<div style="left:47px;top:429px;width:358px;height:22px;border:1px solid #a5a5a5;background:#fff;"></div>
<div class="t c" style="left:49px;top:432.2px;">Scan Serial Number of Lower Arm</div>
<div style="left:404px;top:429px;width:351px;height:22px;border:1px solid #a5a5a5;background:#fff;"></div>
<div class="t c" style="left:406px;top:432.2px;letter-spacing:0.35px;">1/6/2021</div>
<div style="left:754px;top:429px;width:209px;height:22px;border:1px solid #a5a5a5;background:#fff;"></div>
<div class="t c" style="left:756px;top:432.2px;letter-spacing:0.35px;">1/6/2021</div>
<div style="left:962px;top:429px;width:209px;height:22px;border:1px solid #a5a5a5;background:#fff;"></div>
<div class="t c" style="left:964px;top:432.2px;">n/a</div>
<div style="left:1170px;top:429px;width:144px;height:22px;border:1px solid #a5a5a5;background:#fff;"></div>
<div class="t c" style="left:1172px;top:432.2px;">mconway</div>
<div style="left:47px;top:450px;width:358px;height:22px;border:1px solid #a5a5a5;background:#fff;"></div>
<div class="t c" style="left:49px;top:453.2px;">Scan Serial Number of Upper Arm</div>
<div style="left:404px;top:450px;width:351px;height:22px;border:1px solid #a5a5a5;background:#fff;"></div>
<div class="t c" style="left:406px;top:453.2px;letter-spacing:0.35px;">1/6/2021</div>
<div style="left:754px;top:450px;width:209px;height:22px;border:1px solid #a5a5a5;background:#fff;"></div>
<div class="t c" style="left:756px;top:453.2px;letter-spacing:0.35px;">1/6/2021</div>
<div style="left:962px;top:450px;width:209px;height:22px;border:1px solid #a5a5a5;background:#fff;"></div>
<div class="t c" style="left:964px;top:453.2px;">n/a</div>
<div style="left:1170px;top:450px;width:144px;height:22px;border:1px solid #a5a5a5;background:#fff;"></div>
<div class="t c" style="left:1172px;top:453.2px;">mconway</div>
<div style="left:47px;top:471px;width:358px;height:22px;border:1px solid #a5a5a5;background:#fff;"></div>
<div class="t c" style="left:49px;top:474.2px;">Record serial number of Tohnichi CEM-5 Digital Torque Driver</div>
<div style="left:404px;top:471px;width:351px;height:22px;border:1px solid #a5a5a5;background:#fff;"></div>
<div class="t c" style="left:406px;top:474.2px;letter-spacing:0.35px;">1/6/2021</div>
<div style="left:754px;top:471px;width:209px;height:22px;border:1px solid #a5a5a5;background:#fff;"></div>
<div class="t c" style="left:756px;top:474.2px;letter-spacing:0.35px;">1/6/2021</div>
<div style="left:962px;top:471px;width:209px;height:22px;border:1px solid #a5a5a5;background:#fff;"></div>
<div class="t c" style="left:964px;top:474.2px;">n/a</div>
<div style="left:1170px;top:471px;width:144px;height:22px;border:1px solid #a5a5a5;background:#fff;"></div>
<div class="t c" style="left:1172px;top:474.2px;">mconway</div>
<div style="left:47px;top:492px;width:358px;height:22px;border:1px solid #a5a5a5;background:#fff;"></div>
<div class="t c" style="left:49px;top:495.2px;">Torque Upper Arm Hex Bolts to 90-110 ft lbs as shown in graphic</div>
<div style="left:404px;top:492px;width:351px;height:22px;border:1px solid #a5a5a5;background:#fff;"></div>
<div class="t c" style="left:406px;top:495.2px;letter-spacing:0.35px;">1/6/2021</div>
<div style="left:754px;top:492px;width:209px;height:22px;border:1px solid #a5a5a5;background:#fff;"></div>
<div class="t c" style="left:756px;top:495.2px;letter-spacing:0.35px;">1/6/2021</div>
<div style="left:962px;top:492px;width:209px;height:22px;border:1px solid #a5a5a5;background:#fff;"></div>
<div class="t c" style="left:964px;top:495.2px;">n/a</div>
<div style="left:1170px;top:492px;width:144px;height:22px;border:1px solid #a5a5a5;background:#fff;"></div>
<div class="t c" style="left:1172px;top:495.2px;">mconway</div>
<div style="left:47px;top:513px;width:358px;height:22px;border:1px solid #a5a5a5;background:#fff;"></div>
<div class="t c" style="left:49px;top:516.2px;">Torque to 90-110 ft lbs</div>
<div style="left:404px;top:513px;width:351px;height:22px;border:1px solid #a5a5a5;background:#fff;"></div>
<div class="t c" style="left:406px;top:516.2px;letter-spacing:0.35px;">1/6/2021</div>
<div style="left:754px;top:513px;width:209px;height:22px;border:1px solid #a5a5a5;background:#fff;"></div>
<div class="t c" style="left:756px;top:516.2px;letter-spacing:0.35px;">1/6/2021</div>
<div style="left:962px;top:513px;width:209px;height:22px;border:1px solid #a5a5a5;background:#fff;"></div>
<div class="t c" style="left:964px;top:516.2px;">n/a</div>
<div style="left:1170px;top:513px;width:144px;height:22px;border:1px solid #a5a5a5;background:#fff;"></div>
<div class="t c" style="left:1172px;top:516.2px;">mconway</div>
<div style="left:47px;top:534px;width:358px;height:22px;border:1px solid #a5a5a5;background:#fff;"></div>
<div class="t c" style="left:49px;top:537.2px;">Torque to 90-110 ft lbs</div>
<div style="left:404px;top:534px;width:351px;height:22px;border:1px solid #a5a5a5;background:#fff;"></div>
<div class="t c" style="left:406px;top:537.2px;letter-spacing:0.35px;">1/6/2021</div>
<div style="left:754px;top:534px;width:209px;height:22px;border:1px solid #a5a5a5;background:#fff;"></div>
<div class="t c" style="left:756px;top:537.2px;letter-spacing:0.35px;">1/6/2021</div>
<div style="left:962px;top:534px;width:209px;height:22px;border:1px solid #a5a5a5;background:#fff;"></div>
<div class="t c" style="left:964px;top:537.2px;">n/a</div>
<div style="left:1170px;top:534px;width:144px;height:22px;border:1px solid #a5a5a5;background:#fff;"></div>
<div class="t c" style="left:1172px;top:537.2px;">mconway</div>
<div style="left:47px;top:555px;width:358px;height:22px;border:1px solid #a5a5a5;background:#fff;"></div>
<div class="t c" style="left:49px;top:558.2px;">Torque to 90-110 ft lbs</div>
<div style="left:404px;top:555px;width:351px;height:22px;border:1px solid #a5a5a5;background:#fff;"></div>
<div class="t c" style="left:406px;top:558.2px;letter-spacing:0.35px;">1/6/2021</div>
<div style="left:754px;top:555px;width:209px;height:22px;border:1px solid #a5a5a5;background:#fff;"></div>
<div class="t c" style="left:756px;top:558.2px;letter-spacing:0.35px;">1/6/2021</div>
<div style="left:962px;top:555px;width:209px;height:22px;border:1px solid #a5a5a5;background:#fff;"></div>
<div class="t c" style="left:964px;top:558.2px;">n/a</div>
<div style="left:1170px;top:555px;width:144px;height:22px;border:1px solid #a5a5a5;background:#fff;"></div>
<div class="t c" style="left:1172px;top:558.2px;">mconway</div>
<div style="left:47px;top:576px;width:358px;height:22px;border:1px solid #a5a5a5;background:#fff;"></div>
<div class="t c" style="left:49px;top:579.2px;">Torque to 90-110 ft lbs</div>
<div style="left:404px;top:576px;width:351px;height:22px;border:1px solid #a5a5a5;background:#fff;"></div>
<div class="t c" style="left:406px;top:579.2px;letter-spacing:0.35px;">1/6/2021</div>
<div style="left:754px;top:576px;width:209px;height:22px;border:1px solid #a5a5a5;background:#fff;"></div>
<div class="t c" style="left:756px;top:579.2px;letter-spacing:0.35px;">1/6/2021</div>
<div style="left:962px;top:576px;width:209px;height:22px;border:1px solid #a5a5a5;background:#fff;"></div>
<div class="t c" style="left:964px;top:579.2px;">n/a</div>
<div style="left:1170px;top:576px;width:144px;height:22px;border:1px solid #a5a5a5;background:#fff;"></div>
<div class="t c" style="left:1172px;top:579.2px;">mconway</div>
<div style="left:47px;top:597px;width:358px;height:22px;border:1px solid #a5a5a5;background:#fff;"></div>
<div class="t c" style="left:49px;top:600.2px;">Torque to 90-110 ft lbs</div>
<div style="left:404px;top:597px;width:351px;height:22px;border:1px solid #a5a5a5;background:#fff;"></div>
<div class="t c" style="left:406px;top:600.2px;letter-spacing:0.35px;">1/6/2021</div>
<div style="left:754px;top:597px;width:209px;height:22px;border:1px solid #a5a5a5;background:#fff;"></div>
<div class="t c" style="left:756px;top:600.2px;letter-spacing:0.35px;">1/6/2021</div>
<div style="left:962px;top:597px;width:209px;height:22px;border:1px solid #a5a5a5;background:#fff;"></div>
<div class="t c" style="left:964px;top:600.2px;">n/a</div>
<div style="left:1170px;top:597px;width:144px;height:22px;border:1px solid #a5a5a5;background:#fff;"></div>
<div class="t c" style="left:1172px;top:600.2px;">mconway</div>
<div style="left:47px;top:618px;width:358px;height:22px;border:1px solid #a5a5a5;background:#fff;"></div>
<div class="t c" style="left:49px;top:621.2px;">Torque to 90-110 ft lbs</div>
<div style="left:404px;top:618px;width:351px;height:22px;border:1px solid #a5a5a5;background:#fff;"></div>
<div class="t c" style="left:406px;top:621.2px;letter-spacing:0.35px;">1/6/2021</div>
<div style="left:754px;top:618px;width:209px;height:22px;border:1px solid #a5a5a5;background:#fff;"></div>
<div class="t c" style="left:756px;top:621.2px;letter-spacing:0.35px;">1/6/2021</div>
<div style="left:962px;top:618px;width:209px;height:22px;border:1px solid #a5a5a5;background:#fff;"></div>
<div class="t c" style="left:964px;top:621.2px;">n/a</div>
<div style="left:1170px;top:618px;width:144px;height:22px;border:1px solid #a5a5a5;background:#fff;"></div>
<div class="t c" style="left:1172px;top:621.2px;">mconway</div>
<div style="left:47px;top:639px;width:358px;height:22px;border:1px solid #a5a5a5;background:#fff;"></div>
<div class="t c" style="left:49px;top:642.2px;">Torque to 90-110 ft lbs</div>
<div style="left:404px;top:639px;width:351px;height:22px;border:1px solid #a5a5a5;background:#fff;"></div>
<div class="t c" style="left:406px;top:642.2px;letter-spacing:0.35px;">1/6/2021</div>
<div style="left:754px;top:639px;width:209px;height:22px;border:1px solid #a5a5a5;background:#fff;"></div>
<div class="t c" style="left:756px;top:642.2px;letter-spacing:0.35px;">1/6/2021</div>
<div style="left:962px;top:639px;width:209px;height:22px;border:1px solid #a5a5a5;background:#fff;"></div>
<div class="t c" style="left:964px;top:642.2px;">n/a</div>
<div style="left:1170px;top:639px;width:144px;height:22px;border:1px solid #a5a5a5;background:#fff;"></div>
<div class="t c" style="left:1172px;top:642.2px;">mconway</div>
<div style="left:47px;top:660px;width:358px;height:22px;border:1px solid #a5a5a5;background:#fff;"></div>
<div class="t c" style="left:49px;top:663.2px;">Torque to 90-110 ft lbs</div>
<div style="left:404px;top:660px;width:351px;height:22px;border:1px solid #a5a5a5;background:#fff;"></div>
<div class="t c" style="left:406px;top:663.2px;letter-spacing:0.35px;">1/6/2021</div>
<div style="left:754px;top:660px;width:209px;height:22px;border:1px solid #a5a5a5;background:#fff;"></div>
<div class="t c" style="left:756px;top:663.2px;letter-spacing:0.35px;">1/6/2021</div>
<div style="left:962px;top:660px;width:209px;height:22px;border:1px solid #a5a5a5;background:#fff;"></div>
<div class="t c" style="left:964px;top:663.2px;">n/a</div>
<div style="left:1170px;top:660px;width:144px;height:22px;border:1px solid #a5a5a5;background:#fff;"></div>
<div class="t c" style="left:1172px;top:663.2px;">mconway</div>
<div style="left:47px;top:681px;width:358px;height:22px;border:1px solid #a5a5a5;background:#fff;"></div>
<div class="t c" style="left:49px;top:684.2px;">Torque to 90-110 ft lbs</div>
<div style="left:404px;top:681px;width:351px;height:22px;border:1px solid #a5a5a5;background:#fff;"></div>
<div class="t c" style="left:406px;top:684.2px;letter-spacing:0.35px;">1/6/2021</div>
<div style="left:754px;top:681px;width:209px;height:22px;border:1px solid #a5a5a5;background:#fff;"></div>
<div class="t c" style="left:756px;top:684.2px;letter-spacing:0.35px;">1/6/2021</div>
<div style="left:962px;top:681px;width:209px;height:22px;border:1px solid #a5a5a5;background:#fff;"></div>
<div class="t c" style="left:964px;top:684.2px;">n/a</div>
<div style="left:1170px;top:681px;width:144px;height:22px;border:1px solid #a5a5a5;background:#fff;"></div>
<div class="t c" style="left:1172px;top:684.2px;">mconway</div>
<div style="left:47px;top:702px;width:358px;height:22px;border:1px solid #a5a5a5;background:#fff;"></div>
<div class="t c" style="left:49px;top:705.2px;">Torque to 90-110 ft lbs</div>
<div style="left:404px;top:702px;width:351px;height:22px;border:1px solid #a5a5a5;background:#fff;"></div>
<div class="t c" style="left:406px;top:705.2px;letter-spacing:0.35px;">1/6/2021</div>
<div style="left:754px;top:702px;width:209px;height:22px;border:1px solid #a5a5a5;background:#fff;"></div>
<div class="t c" style="left:756px;top:705.2px;letter-spacing:0.35px;">1/6/2021</div>
<div style="left:962px;top:702px;width:209px;height:22px;border:1px solid #a5a5a5;background:#fff;"></div>
<div class="t c" style="left:964px;top:705.2px;">n/a</div>
<div style="left:1170px;top:702px;width:144px;height:22px;border:1px solid #a5a5a5;background:#fff;"></div>
<div class="t c" style="left:1172px;top:705.2px;">mconway</div>
<div style="left:47px;top:723px;width:358px;height:22px;border:1px solid #a5a5a5;background:#fff;"></div>
<div class="t c" style="left:49px;top:726.2px;">Torque to 90-110 ft lbs</div>
<div style="left:404px;top:723px;width:351px;height:22px;border:1px solid #a5a5a5;background:#fff;"></div>
<div class="t c" style="left:406px;top:726.2px;letter-spacing:0.35px;">1/6/2021</div>
<div style="left:754px;top:723px;width:209px;height:22px;border:1px solid #a5a5a5;background:#fff;"></div>
<div class="t c" style="left:756px;top:726.2px;letter-spacing:0.35px;">1/6/2021</div>
<div style="left:962px;top:723px;width:209px;height:22px;border:1px solid #a5a5a5;background:#fff;"></div>
<div class="t c" style="left:964px;top:726.2px;">n/a</div>
<div style="left:1170px;top:723px;width:144px;height:22px;border:1px solid #a5a5a5;background:#fff;"></div>
<div class="t c" style="left:1172px;top:726.2px;">mconway</div>
<div style="left:47px;top:744px;width:358px;height:22px;border:1px solid #a5a5a5;background:#fff;"></div>
<div class="t c" style="left:49px;top:747.2px;">Scan Serial Number of SERVO-1</div>
<div style="left:404px;top:744px;width:351px;height:22px;border:1px solid #a5a5a5;background:#fff;"></div>
<div class="t c" style="left:406px;top:747.2px;letter-spacing:0.35px;">1/6/2021</div>
<div style="left:754px;top:744px;width:209px;height:22px;border:1px solid #a5a5a5;background:#fff;"></div>
<div class="t c" style="left:756px;top:747.2px;letter-spacing:0.35px;">1/6/2021</div>
<div style="left:962px;top:744px;width:209px;height:22px;border:1px solid #a5a5a5;background:#fff;"></div>
<div class="t c" style="left:964px;top:747.2px;">n/a</div>
<div style="left:1170px;top:744px;width:144px;height:22px;border:1px solid #a5a5a5;background:#fff;"></div>
<div class="t c" style="left:1172px;top:747.2px;">mconway</div>
<div style="left:47px;top:765px;width:358px;height:22px;border:1px solid #a5a5a5;background:#fff;"></div>
<div class="t c" style="left:49px;top:768.2px;">Scan Serial Number of SERVO-4</div>
<div style="left:404px;top:765px;width:351px;height:22px;border:1px solid #a5a5a5;background:#fff;"></div>
<div class="t c" style="left:406px;top:768.2px;letter-spacing:0.35px;">1/6/2021</div>
<div style="left:754px;top:765px;width:209px;height:22px;border:1px solid #a5a5a5;background:#fff;"></div>
<div class="t c" style="left:756px;top:768.2px;letter-spacing:0.35px;">1/6/2021</div>
<div style="left:962px;top:765px;width:209px;height:22px;border:1px solid #a5a5a5;background:#fff;"></div>
<div class="t c" style="left:964px;top:768.2px;">n/a</div>
<div style="left:1170px;top:765px;width:144px;height:22px;border:1px solid #a5a5a5;background:#fff;"></div>
<div class="t c" style="left:1172px;top:768.2px;">mconway</div>
<div style="left:47px;top:786px;width:358px;height:22px;border:1px solid #a5a5a5;background:#fff;"></div>
<div class="t c" style="left:49px;top:789.2px;">Scan Serial Number of SERVO-5</div>
<div style="left:404px;top:786px;width:351px;height:22px;border:1px solid #a5a5a5;background:#fff;"></div>
<div class="t c" style="left:406px;top:789.2px;letter-spacing:0.35px;">1/6/2021</div>
<div style="left:754px;top:786px;width:209px;height:22px;border:1px solid #a5a5a5;background:#fff;"></div>
<div class="t c" style="left:756px;top:789.2px;letter-spacing:0.35px;">1/6/2021</div>
<div style="left:962px;top:786px;width:209px;height:22px;border:1px solid #a5a5a5;background:#fff;"></div>
<div class="t c" style="left:964px;top:789.2px;">n/a</div>
<div style="left:1170px;top:786px;width:144px;height:22px;border:1px solid #a5a5a5;background:#fff;"></div>
<div class="t c" style="left:1172px;top:789.2px;">mconway</div>
<div style="left:47px;top:807px;width:358px;height:22px;border:1px solid #a5a5a5;background:#fff;"></div>
<div class="t c" style="left:49px;top:810.2px;">Scan Serial Number of SERVO-6</div>
<div style="left:404px;top:807px;width:351px;height:22px;border:1px solid #a5a5a5;background:#fff;"></div>
<div class="t c" style="left:406px;top:810.2px;letter-spacing:0.35px;">1/6/2021</div>
<div style="left:754px;top:807px;width:209px;height:22px;border:1px solid #a5a5a5;background:#fff;"></div>
<div class="t c" style="left:756px;top:810.2px;letter-spacing:0.35px;">1/6/2021</div>
<div style="left:962px;top:807px;width:209px;height:22px;border:1px solid #a5a5a5;background:#fff;"></div>
<div class="t c" style="left:964px;top:810.2px;">n/a</div>
<div style="left:1170px;top:807px;width:144px;height:22px;border:1px solid #a5a5a5;background:#fff;"></div>
<div class="t c" style="left:1172px;top:810.2px;">mconway</div>
<div style="left:0px;top:0px;width:2000px;height:19px;background:#525252"></div>
<div style="left:25px;top:19px;width:2000px;height:1px;background:#9a9a9a"></div>
<div style="left:25px;top:0px;width:1px;height:19px;background:#c9c9c9"></div>
<div class="t" style="left:-13.5px;top:2.5px;width:100px;text-align:center;font-size:12.3px;color:#f2f2f2">A</div>
<div style="left:47px;top:0px;width:1px;height:19px;background:#c9c9c9"></div>
<div class="t" style="left:61.5px;top:2.5px;width:100px;text-align:center;font-size:12.3px;color:#f2f2f2">B</div>
<div style="left:175px;top:0px;width:1px;height:19px;background:#c9c9c9"></div>
<div class="t" style="left:240.0px;top:2.5px;width:100px;text-align:center;font-size:12.3px;color:#f2f2f2">C</div>
<div style="left:404px;top:0px;width:1px;height:19px;background:#c9c9c9"></div>
<div class="t" style="left:471.5px;top:2.5px;width:100px;text-align:center;font-size:12.3px;color:#f2f2f2">D</div>
<div style="left:638px;top:0px;width:1px;height:19px;background:#c9c9c9"></div>
<div class="t" style="left:621.0px;top:2.5px;width:100px;text-align:center;font-size:12.3px;color:#f2f2f2">E</div>
<div style="left:703px;top:0px;width:1px;height:19px;background:#c9c9c9"></div>
<div class="t" style="left:679.0px;top:2.5px;width:100px;text-align:center;font-size:12.3px;color:#f2f2f2">F</div>
<div style="left:754px;top:0px;width:1px;height:19px;background:#c9c9c9"></div>
<div class="t" style="left:730.0px;top:2.5px;width:100px;text-align:center;font-size:12.3px;color:#f2f2f2">G</div>
<div style="left:805px;top:0px;width:1px;height:19px;background:#c9c9c9"></div>
<div class="t" style="left:776.0px;top:2.5px;width:100px;text-align:center;font-size:12.3px;color:#f2f2f2">H</div>
<div style="left:846px;top:0px;width:1px;height:19px;background:#c9c9c9"></div>
<div class="t" style="left:854.5px;top:2.5px;width:100px;text-align:center;font-size:12.3px;color:#f2f2f2">I</div>
<div style="left:962px;top:0px;width:1px;height:19px;background:#c9c9c9"></div>
<div class="t" style="left:984.0px;top:2.5px;width:100px;text-align:center;font-size:12.3px;color:#f2f2f2">J</div>
<div style="left:1105px;top:0px;width:1px;height:19px;background:#c9c9c9"></div>
<div class="t" style="left:1080.0px;top:2.5px;width:100px;text-align:center;font-size:12.3px;color:#f2f2f2">K</div>
<div style="left:1154px;top:0px;width:1px;height:19px;background:#c9c9c9"></div>
<div class="t" style="left:1112.5px;top:2.5px;width:100px;text-align:center;font-size:12.3px;color:#f2f2f2">L</div>
<div style="left:1170px;top:0px;width:1px;height:19px;background:#c9c9c9"></div>
<div class="t" style="left:1140.5px;top:2.5px;width:100px;text-align:center;font-size:12.3px;color:#f2f2f2">M</div>
<div style="left:1210px;top:0px;width:1px;height:19px;background:#c9c9c9"></div>
<div class="t" style="left:1212.0px;top:2.5px;width:100px;text-align:center;font-size:12.3px;color:#f2f2f2">N</div>
<div style="left:1313px;top:0px;width:1px;height:19px;background:#c9c9c9"></div>
<div class="t" style="left:1295.5px;top:2.5px;width:100px;text-align:center;font-size:12.3px;color:#f2f2f2">O</div>
<div style="left:1377px;top:0px;width:1px;height:19px;background:#c9c9c9"></div>
<div style="left:0px;top:19px;width:25px;height:900px;background:#525252"></div>
<div style="left:25px;top:19px;width:1px;height:900px;background:#8f8f8f"></div>
<div style="left:0px;top:36px;width:25px;height:1px;background:#c9c9c9"></div>
<div class="t" style="left:0px;top:20.099999999999994px;width:25px;text-align:center;font-size:12.5px;color:#f2f2f2">1</div>
<div style="left:0px;top:59px;width:25px;height:1px;background:#c9c9c9"></div>
<div class="t" style="left:0px;top:43.099999999999994px;width:25px;text-align:center;font-size:12.5px;color:#f2f2f2">2</div>
<div style="left:0px;top:82px;width:25px;height:1px;background:#c9c9c9"></div>
<div class="t" style="left:0px;top:66.1px;width:25px;text-align:center;font-size:12.5px;color:#f2f2f2">3</div>
<div style="left:0px;top:99px;width:25px;height:1px;background:#c9c9c9"></div>
<div class="t" style="left:0px;top:83.1px;width:25px;text-align:center;font-size:12.5px;color:#f2f2f2">4</div>
<div style="left:0px;top:120px;width:25px;height:1px;background:#c9c9c9"></div>
<div class="t" style="left:0px;top:104.10000000000002px;width:25px;text-align:center;font-size:12.5px;color:#f2f2f2">5</div>
<div style="left:0px;top:141px;width:25px;height:1px;background:#c9c9c9"></div>
<div class="t" style="left:0px;top:125.10000000000002px;width:25px;text-align:center;font-size:12.5px;color:#f2f2f2">6</div>
<div style="left:0px;top:162px;width:25px;height:1px;background:#c9c9c9"></div>
<div class="t" style="left:0px;top:146.10000000000002px;width:25px;text-align:center;font-size:12.5px;color:#f2f2f2">7</div>
<div style="left:0px;top:163px;width:25px;height:22px;background:#676767"></div>
<div style="left:0px;top:185px;width:25px;height:1px;background:#c9c9c9"></div>
<div class="t" style="left:0px;top:169.10000000000002px;width:25px;text-align:center;font-size:12.5px;color:#f2f2f2">8</div>
<div style="left:0px;top:202px;width:25px;height:1px;background:#c9c9c9"></div>
<div class="t" style="left:0px;top:186.10000000000002px;width:25px;text-align:center;font-size:12.5px;color:#f2f2f2">9</div>
<div style="left:0px;top:223px;width:25px;height:1px;background:#c9c9c9"></div>
<div class="t" style="left:0px;top:207.10000000000002px;width:25px;text-align:center;font-size:12.5px;color:#f2f2f2">10</div>
<div style="left:0px;top:244px;width:25px;height:1px;background:#c9c9c9"></div>
<div class="t" style="left:0px;top:228.10000000000002px;width:25px;text-align:center;font-size:12.5px;color:#f2f2f2">11</div>
<div style="left:0px;top:265px;width:25px;height:1px;background:#c9c9c9"></div>
<div class="t" style="left:0px;top:249.10000000000002px;width:25px;text-align:center;font-size:12.5px;color:#f2f2f2">12</div>
<div style="left:0px;top:288px;width:25px;height:1px;background:#c9c9c9"></div>
<div class="t" style="left:0px;top:272.1px;width:25px;text-align:center;font-size:12.5px;color:#f2f2f2">13</div>
<div style="left:0px;top:305px;width:25px;height:1px;background:#c9c9c9"></div>
<div class="t" style="left:0px;top:289.1px;width:25px;text-align:center;font-size:12.5px;color:#f2f2f2">14</div>
<div style="left:0px;top:326px;width:25px;height:1px;background:#c9c9c9"></div>
<div class="t" style="left:0px;top:310.1px;width:25px;text-align:center;font-size:12.5px;color:#f2f2f2">15</div>
<div style="left:0px;top:347px;width:25px;height:1px;background:#c9c9c9"></div>
<div class="t" style="left:0px;top:331.1px;width:25px;text-align:center;font-size:12.5px;color:#f2f2f2">16</div>
<div style="left:0px;top:368px;width:25px;height:1px;background:#c9c9c9"></div>
<div class="t" style="left:0px;top:352.1px;width:25px;text-align:center;font-size:12.5px;color:#f2f2f2">17</div>
<div style="left:0px;top:391px;width:25px;height:1px;background:#c9c9c9"></div>
<div class="t" style="left:0px;top:375.1px;width:25px;text-align:center;font-size:12.5px;color:#f2f2f2">18</div>
<div style="left:0px;top:408px;width:25px;height:1px;background:#c9c9c9"></div>
<div class="t" style="left:0px;top:392.1px;width:25px;text-align:center;font-size:12.5px;color:#f2f2f2">19</div>
<div style="left:0px;top:429px;width:25px;height:1px;background:#c9c9c9"></div>
<div class="t" style="left:0px;top:413.1px;width:25px;text-align:center;font-size:12.5px;color:#f2f2f2">20</div>
<div style="left:0px;top:450px;width:25px;height:1px;background:#c9c9c9"></div>
<div class="t" style="left:0px;top:434.1px;width:25px;text-align:center;font-size:12.5px;color:#f2f2f2">21</div>
<div style="left:0px;top:471px;width:25px;height:1px;background:#c9c9c9"></div>
<div class="t" style="left:0px;top:455.1px;width:25px;text-align:center;font-size:12.5px;color:#f2f2f2">22</div>
<div style="left:0px;top:492px;width:25px;height:1px;background:#c9c9c9"></div>
<div class="t" style="left:0px;top:476.1px;width:25px;text-align:center;font-size:12.5px;color:#f2f2f2">23</div>
<div style="left:0px;top:513px;width:25px;height:1px;background:#c9c9c9"></div>
<div class="t" style="left:0px;top:497.1px;width:25px;text-align:center;font-size:12.5px;color:#f2f2f2">24</div>
<div style="left:0px;top:534px;width:25px;height:1px;background:#c9c9c9"></div>
<div class="t" style="left:0px;top:518.1px;width:25px;text-align:center;font-size:12.5px;color:#f2f2f2">25</div>
<div style="left:0px;top:555px;width:25px;height:1px;background:#c9c9c9"></div>
<div class="t" style="left:0px;top:539.1px;width:25px;text-align:center;font-size:12.5px;color:#f2f2f2">26</div>
<div style="left:0px;top:576px;width:25px;height:1px;background:#c9c9c9"></div>
<div class="t" style="left:0px;top:560.1px;width:25px;text-align:center;font-size:12.5px;color:#f2f2f2">27</div>
<div style="left:0px;top:597px;width:25px;height:1px;background:#c9c9c9"></div>
<div class="t" style="left:0px;top:581.1px;width:25px;text-align:center;font-size:12.5px;color:#f2f2f2">28</div>
<div style="left:0px;top:618px;width:25px;height:1px;background:#c9c9c9"></div>
<div class="t" style="left:0px;top:602.1px;width:25px;text-align:center;font-size:12.5px;color:#f2f2f2">29</div>
<div style="left:0px;top:639px;width:25px;height:1px;background:#c9c9c9"></div>
<div class="t" style="left:0px;top:623.1px;width:25px;text-align:center;font-size:12.5px;color:#f2f2f2">30</div>
<div style="left:0px;top:660px;width:25px;height:1px;background:#c9c9c9"></div>
<div class="t" style="left:0px;top:644.1px;width:25px;text-align:center;font-size:12.5px;color:#f2f2f2">31</div>
<div style="left:0px;top:681px;width:25px;height:1px;background:#c9c9c9"></div>
<div class="t" style="left:0px;top:665.1px;width:25px;text-align:center;font-size:12.5px;color:#f2f2f2">32</div>
<div style="left:0px;top:702px;width:25px;height:1px;background:#c9c9c9"></div>
<div class="t" style="left:0px;top:686.1px;width:25px;text-align:center;font-size:12.5px;color:#f2f2f2">33</div>
<div style="left:0px;top:723px;width:25px;height:1px;background:#c9c9c9"></div>
<div class="t" style="left:0px;top:707.1px;width:25px;text-align:center;font-size:12.5px;color:#f2f2f2">34</div>
<div style="left:0px;top:744px;width:25px;height:1px;background:#c9c9c9"></div>
<div class="t" style="left:0px;top:728.1px;width:25px;text-align:center;font-size:12.5px;color:#f2f2f2">35</div>
<div style="left:0px;top:765px;width:25px;height:1px;background:#c9c9c9"></div>
<div class="t" style="left:0px;top:749.1px;width:25px;text-align:center;font-size:12.5px;color:#f2f2f2">36</div>
<div style="left:0px;top:786px;width:25px;height:1px;background:#c9c9c9"></div>
<div class="t" style="left:0px;top:770.1px;width:25px;text-align:center;font-size:12.5px;color:#f2f2f2">37</div>
<div style="left:0px;top:807px;width:25px;height:1px;background:#c9c9c9"></div>
<div class="t" style="left:0px;top:791.1px;width:25px;text-align:center;font-size:12.5px;color:#f2f2f2">38</div>
<div style="left:0px;top:828px;width:25px;height:1px;background:#c9c9c9"></div>
<div class="t" style="left:0px;top:812.1px;width:25px;text-align:center;font-size:12.5px;color:#f2f2f2">39</div>
<div style="left:0px;top:19px;width:25px;height:1px;background:#c9c9c9"></div>
<div style="left:24px;top:162px;width:2px;height:24px;background:#107c41"></div>
<svg style="left:10px;top:4px" width="13" height="13" viewBox="0 0 13 13"><path d="M0.5 12 H12 V0.5 Z" fill="#e6e6e6"/></svg>
</div>
<div style="left:1332px;top:160px;width:23px;height:817px;background:linear-gradient(#4b555c,#4b545b 49%,#52524f 62%,#57524c 73%)"></div>
<div style="left:1332px;top:160px;width:1px;height:817px;background:#4c4c4c"></div>
<div style="left:1335px;top:160px;width:17px;height:819px;background:#3d3d3d;border-radius:8.5px"></div>
<svg style="left:1339px;top:165px" width="9" height="7" viewBox="0 0 9 7"><path d="M4.5 0.5 L8.6 6.6 H0.4 Z" fill="#c4c4c4" stroke="#c4c4c4" stroke-width="0.8" stroke-linejoin="round"/></svg>
<div style="left:1339px;top:177px;width:9px;height:581px;background:#c6c6c6;border-radius:4.5px"></div>
<svg style="left:1339px;top:968px" width="9" height="7" viewBox="0 0 9 7"><path d="M4.5 6.5 L8.6 0.4 H0.4 Z" fill="#c4c4c4" stroke="#c4c4c4" stroke-width="0.8" stroke-linejoin="round"/></svg>
<div style="left:0px;top:977px;width:1355px;height:32px;background:#57524c"></div>
<svg style="left:28px;top:987px" width="9" height="11" viewBox="0 0 9 11" fill="none" stroke="#9a9793" stroke-width="1.1"><path d="M7.5 0.5 L1.5 5.5 L7.5 10.5"/></svg>
<svg style="left:61px;top:987px" width="9" height="11" viewBox="0 0 9 11" fill="none" stroke="#9a9793" stroke-width="1.1"><path d="M1.5 0.5 L7.5 5.5 L1.5 10.5"/></svg>
<svg style="left:112px;top:977px" width="62" height="29" viewBox="0 0 62 29">
<path d="M0 0 H62 C58 0 57 1 57 5 V23 C57 26.5 55.5 28 52 28 H10 C6.5 28 5 26.5 5 23 V5 C5 1 4 0 0 0 Z" fill="#fcfcfc"/></svg>
<div class="t ui" style="left:124.5px;top:982.5px;font-size:12.8px;color:#2a2a2a;letter-spacing:0.5px;-webkit-text-stroke:0.35px #2a2a2a">Sheet</div>
<div style="left:125px;top:1000px;width:36px;height:2px;background:#107c41"></div>
<div style="left:173px;top:984px;width:1px;height:18px;background:#807b76"></div>
<svg style="left:216px;top:987px" width="12" height="12" viewBox="0 0 12 12" fill="none" stroke="#e0e0e0" stroke-width="1"><path d="M5.5 0 V11 M0 5.5 H11"/></svg>
<div style="left:815px;top:989px;width:2px;height:2px;background:#e8e8e8"></div>
<div style="left:815px;top:993px;width:2px;height:2px;background:#e8e8e8"></div>
<div style="left:815px;top:997px;width:2px;height:2px;background:#e8e8e8"></div>
<div style="left:832px;top:984px;width:503px;height:17px;background:#3d3d3d;border-radius:8.5px"></div>
<svg style="left:836px;top:987px" width="9" height="11" viewBox="0 0 9 11"><path d="M0.6 5.5 L8 1 V10 Z" fill="#c4c4c4" stroke="#c4c4c4" stroke-width="0.8" stroke-linejoin="round"/></svg>
<div style="left:849px;top:988px;width:451px;height:9px;background:#c6c6c6;border-radius:4.5px"></div>
<svg style="left:1321px;top:987px" width="9" height="11" viewBox="0 0 9 11"><path d="M8.4 5.5 L1 1 V10 Z" fill="#c4c4c4" stroke="#c4c4c4" stroke-width="0.8" stroke-linejoin="round"/></svg>
<div style="left:0px;top:1009px;width:1355px;height:23px;background:#505050"></div>
<div style="left:0px;top:1009px;width:1355px;height:1px;background:#3f3f3f"></div>
<div class="t ui" style="left:12px;top:1013px;font-size:11.3px;color:#f0f0f0">Ready</div>
<svg style="left:62px;top:1012px" width="16" height="17" viewBox="0 0 16 17" fill="none" stroke="#f0f0f0" stroke-width="1">
<circle cx="7" cy="3.2" r="1.9"/><path d="M2.2 3.9 C1.2 3.9 1.1 5.4 2.1 5.8 L4.4 6.9 L4.4 9.8 L3.3 14.3 C3.1 15.3 4.6 15.7 5 14.7 L6.9 10.6 L8.2 14.7 C8.6 15.6 9.6 15.2 9.6 14.4"/><path d="M11.8 3.9 C12.8 3.9 12.9 5.4 11.9 5.8 L9.4 6.9"/><path d="M2.3 3.9 L4.6 5.2 C5.9 5.8 8.1 5.8 9.4 5.2 L11.7 3.9"/>
<path d="M11.2 9.6 C11.2 8 14.6 7.8 14.6 9.8 C14.6 11.2 12.8 11.4 12.8 13.2"/><path d="M12.8 14.6 V15.6"/></svg>
<div class="t ui" style="left:80px;top:1013px;font-size:11.3px;color:#f0f0f0">Accessibility: Unavailable</div>
<div style="left:1043px;top:1009px;width:40px;height:22px;background:#5c5c5c"></div>
<svg style="left:1056px;top:1013px" width="14" height="14" viewBox="0 0 14 14" fill="none" stroke="#f0f0f0" stroke-width="1">
<rect x="0.5" y="0.5" width="13" height="13"/><path d="M0.5 4.8 H13.5 M0.5 9.2 H13.5 M4.8 0.5 V13.5 M9.2 0.5 V13.5"/></svg>
<svg style="left:1096px;top:1013px" width="15" height="14" viewBox="0 0 15 14" fill="none" stroke="#f0f0f0" stroke-width="1">
<rect x="0.5" y="0.5" width="14" height="13"/><rect x="3.5" y="3" width="8" height="8"/><path d="M5 5.2 H10 M5 7 H10 M5 8.8 H10"/></svg>
<svg style="left:1136px;top:1013px" width="15" height="14" viewBox="0 0 15 14" fill="none" stroke="#f0f0f0" stroke-width="1">
<path d="M0.5 13.5 V0.5 H14.5 V13.5 M0.5 8.5 H7.5 V0.5 M0.5 13.5 H14.5"/></svg>
<div style="left:1169px;top:1020px;width:8px;height:1px;background:#e8e8e8"></div>
<div style="left:1182px;top:1020px;width:100px;height:1px;background:#a0a0a0"></div>
<div style="left:1230px;top:1014px;width:5px;height:13px;background:#b8b8b8"></div>
<svg style="left:1286px;top:1015px" width="10" height="10" viewBox="0 0 10 10" fill="none" stroke="#e8e8e8" stroke-width="1"><path d="M5 0 V10 M0 5 H10"/></svg>
<div class="t ui" style="left:1307px;top:1012px;font-size:11.3px;color:#f0f0f0;letter-spacing:-0.3px">100%</div>
<div style="left:0px;top:0px;width:1355px;height:1px;background:#a3a3a3"></div>
<div style="left:0px;top:0px;width:1px;height:1032px;background:#9a9a9a"></div>
<div style="left:1354px;top:0px;width:1px;height:1032px;background:#9a9a9a"></div>
<div style="left:0px;top:1031px;width:1355px;height:1px;background:#a3a3a3"></div>
</body></html>
